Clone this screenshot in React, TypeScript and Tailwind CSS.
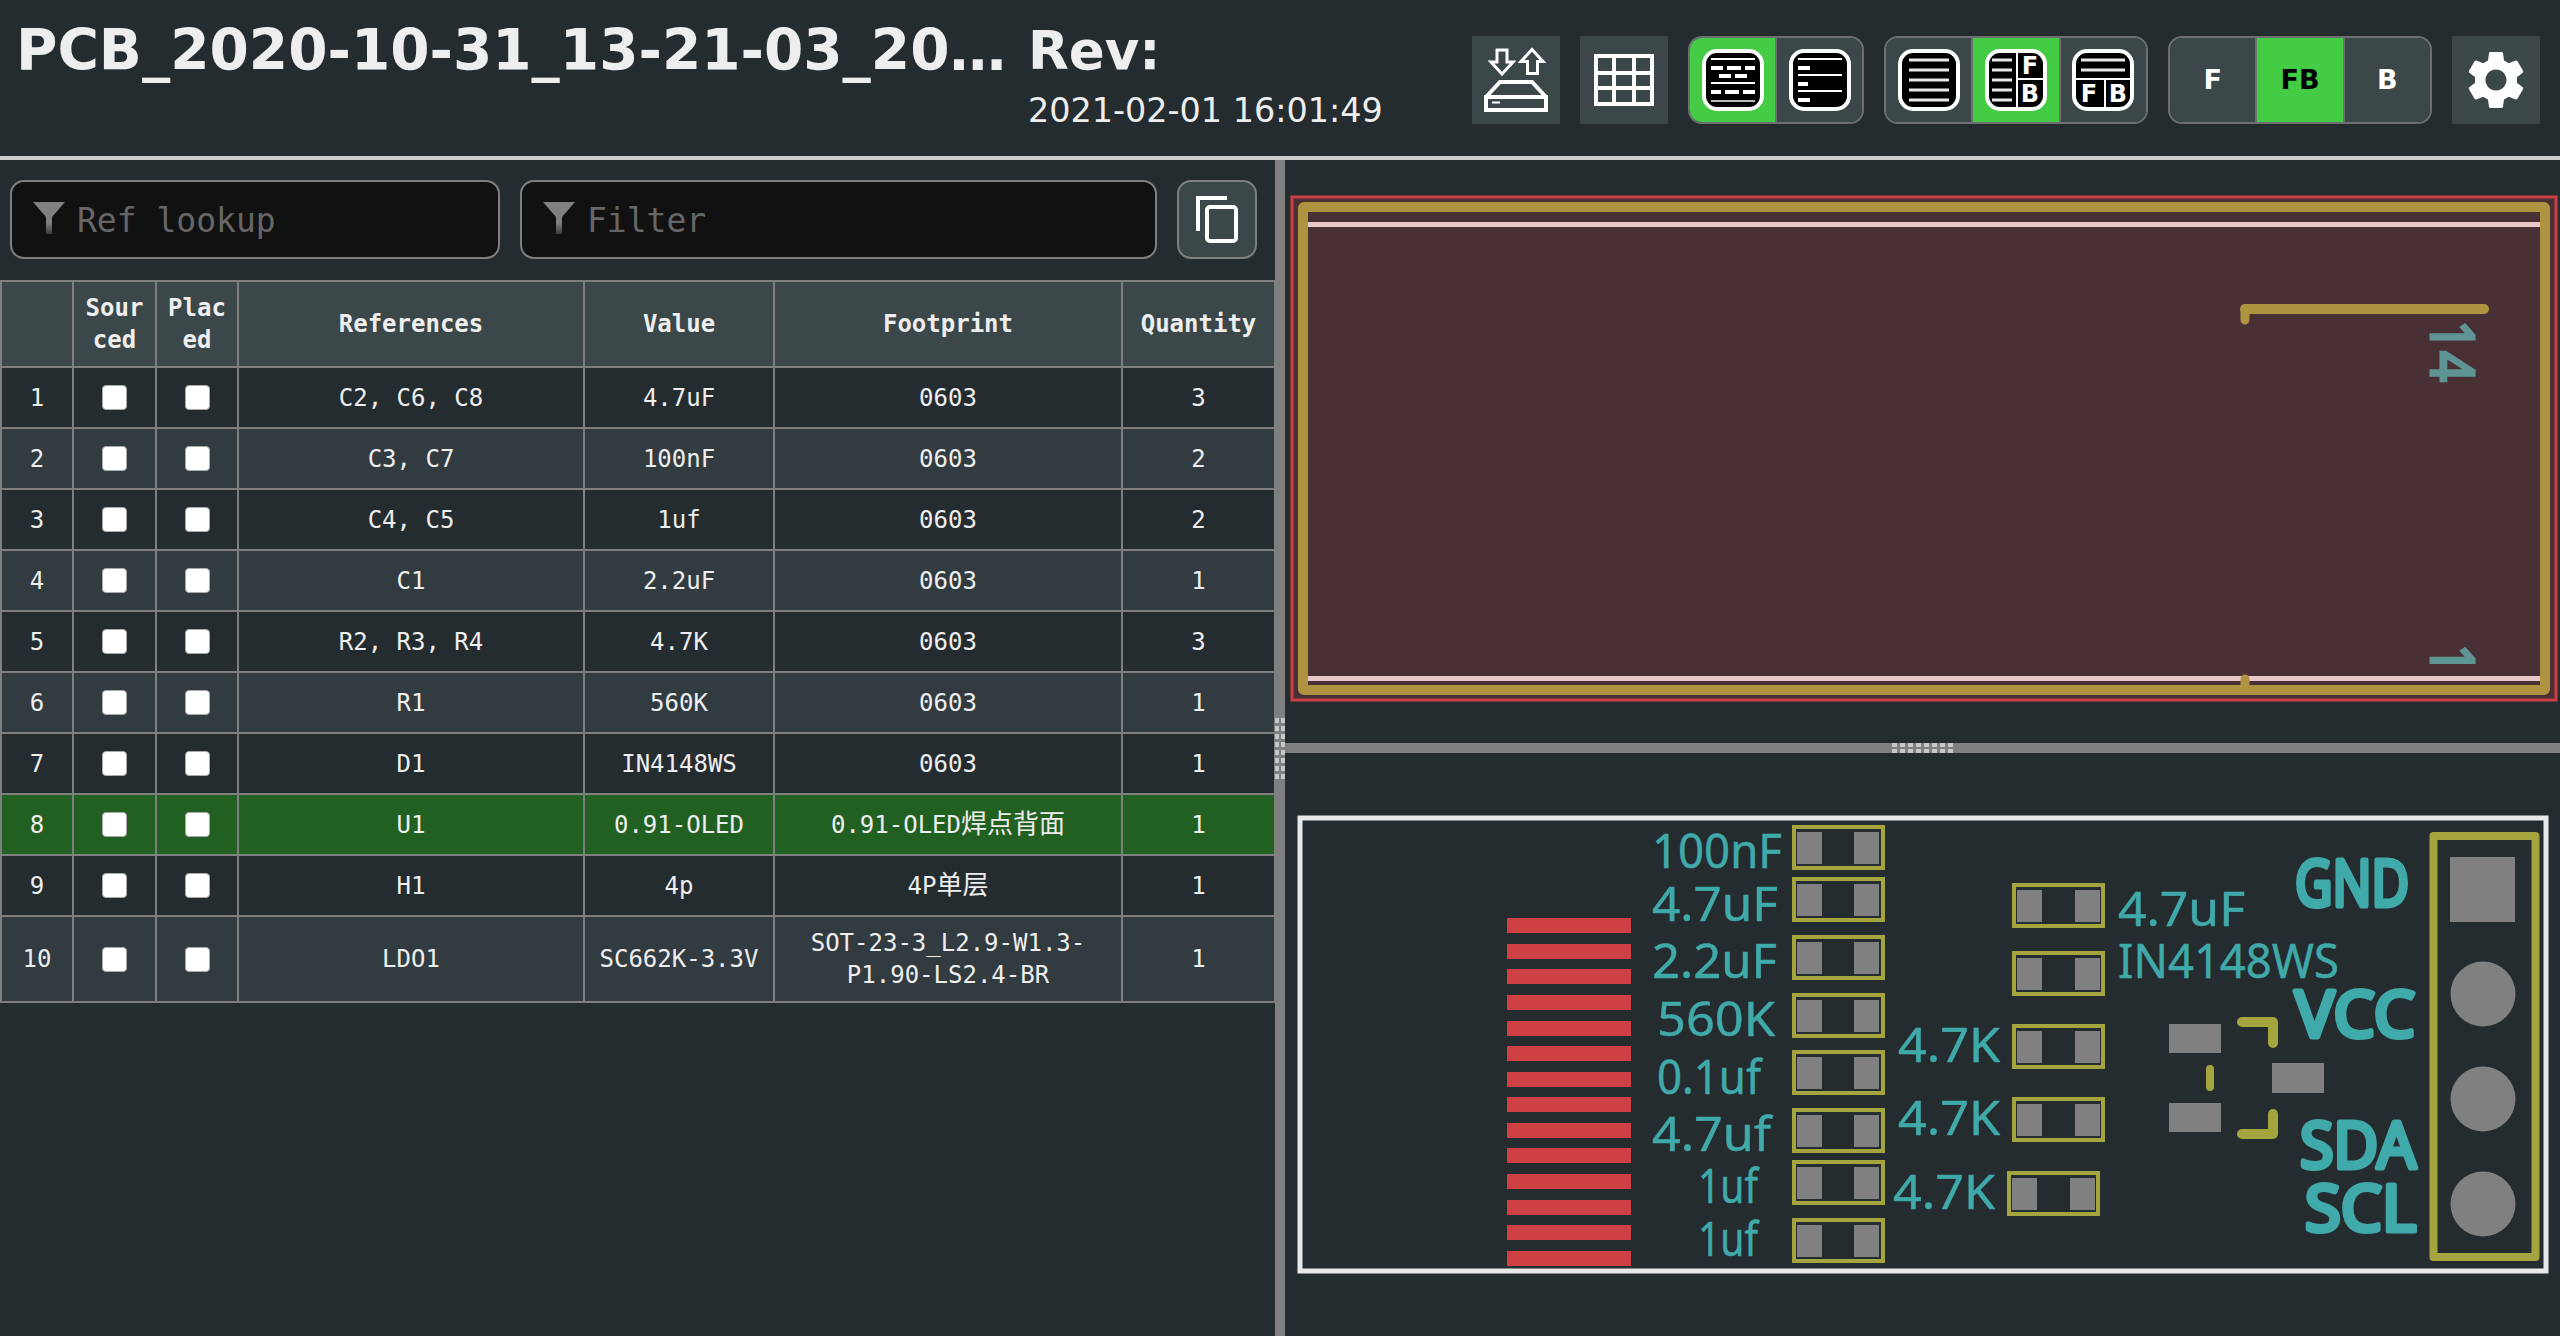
import React from 'react';

const Cjk = ({ children }: { children: React.ReactNode }) => <span className="text-[26px]">{children}</span>;

const rows: { n: number; refs: string; value: string; fp: React.ReactNode; qty: number }[] = [
  { n: 1, refs: 'C2, C6, C8', value: '4.7uF', fp: '0603', qty: 3 },
  { n: 2, refs: 'C3, C7', value: '100nF', fp: '0603', qty: 2 },
  { n: 3, refs: 'C4, C5', value: '1uf', fp: '0603', qty: 2 },
  { n: 4, refs: 'C1', value: '2.2uF', fp: '0603', qty: 1 },
  { n: 5, refs: 'R2, R3, R4', value: '4.7K', fp: '0603', qty: 3 },
  { n: 6, refs: 'R1', value: '560K', fp: '0603', qty: 1 },
  { n: 7, refs: 'D1', value: 'IN4148WS', fp: '0603', qty: 1 },
  { n: 8, refs: 'U1', value: '0.91-OLED', fp: <>0.91-OLED<Cjk>焊点背面</Cjk></>, qty: 1 },
  { n: 9, refs: 'H1', value: '4p', fp: <>4P<Cjk>单层</Cjk></>, qty: 1 },
  { n: 10, refs: 'LDO1', value: 'SC662K-3.3V', fp: 'SOT-23-3_L2.9-W1.3-P1.90-LS2.4-BR', qty: 1 },
];

// screen coordinates of the silkscreen labels: x, baseline, width, text
const thinLabels: [number, number, number, string][] = [
  [1652, 868, 130, '100nF'],
  [1652, 921, 126, '4.7uF'],
  [1652, 978, 125, '2.2uF'],
  [1657, 1036, 118, '560K'],
  [1657, 1094, 104, '0.1uf'],
  [1652, 1151, 119, '4.7uf'],
  [1698, 1203, 60, '1uf'],
  [1698, 1256, 60, '1uf'],
  [1898, 1062, 102, '4.7K'],
  [1898, 1135, 102, '4.7K'],
  [1893, 1209, 102, '4.7K'],
  [2118, 926, 127, '4.7uF'],
  [2118, 978, 221, 'IN4148WS'],
];

const boldLabels: [number, number, number, string][] = [
  [2295, 906, 114, 'GND'],
  [2295, 1037, 120, 'VCC'],
  [2300, 1168, 116, 'SDA'],
  [2305, 1231, 111, 'SCL'],
];

const redBars = [918, 944, 969, 995, 1021, 1046, 1072, 1097, 1123, 1148, 1174, 1200, 1225, 1251];

const leftParts = [825, 877, 935, 993, 1050, 1108, 1160, 1218];

const rightParts: [number, number][] = [
  [2012, 883],
  [2012, 951],
  [2012, 1024],
  [2012, 1097],
  [2007, 1171],
];

const IconFrame = ({ children }: { children: React.ReactNode }) => (
  <svg width="64" height="64" viewBox="-1 -1 64 64">
    <rect x="2" y="2" width="58" height="58" rx="13" fill="#000" stroke="#fff" strokeWidth="4" />
    {children}
  </svg>
);

const ToolButton = ({ children, active, divider }: { children: React.ReactNode; active?: boolean; divider?: boolean }) => (
  <div
    className={`flex-1 h-full flex items-center justify-center ${active ? 'bg-[#44cc44] text-black' : 'bg-[#3b4749] text-white'} ${divider ? 'border-l-2 border-[#6f6f6f]' : ''}`}
  >
    {children}
  </div>
);

const ToolGroup = ({ children, wide }: { children: React.ReactNode; wide?: boolean }) => (
  <div className={`${wide ? 'w-[264px]' : 'w-[176px]'} h-[88px] flex rounded-[14px] border-2 border-[#6f6f6f] overflow-hidden`}>{children}</div>
);

const FunnelIcon = () => (
  <svg width="32" height="32" viewBox="0 0 32 32" className="shrink-0 -translate-y-[2px]">
    <defs>
      <linearGradient id="funnelFade" x1="0" y1="0" x2="0" y2="1">
        <stop offset="0.65" stopColor="#808080" />
        <stop offset="1" stopColor="#3a3a3a" />
      </linearGradient>
    </defs>
    <path d="M0 0H32L19 15V32H13V15Z" fill="url(#funnelFade)" />
  </svg>
);

const Grip = ({ vertical }: { vertical?: boolean }) => (
  <svg width={vertical ? 10 : 61} height={vertical ? 61 : 10} viewBox={vertical ? '0 0 10 61' : '0 0 61 10'}>
    {[0, 8, 16, 24, 32, 40, 48, 56].map((p) =>
      vertical ? (
        <g key={p} fill="#c8c8c8">
          <rect x="0" y={p} width="4" height="5" />
          <rect x="6" y={p} width="4" height="5" />
        </g>
      ) : (
        <g key={p} fill="#c8c8c8">
          <rect x={p} y="0" width="5" height="4" />
          <rect x={p} y="6" width="5" height="4" />
        </g>
      ),
    )}
  </svg>
);

const Part = ({ x, y, w, gap }: { x: number; y: number; w: number; gap: number }) => (
  <g>
    <rect x={x + 2} y={y + 2} width={w - 4} height="41" fill="none" stroke="#a5a53f" strokeWidth="4" />
    <rect x={x + 5} y={y + 7} width="25" height="32" fill="#808080" />
    <rect x={x + gap} y={y + 7} width="25" height="32" fill="#808080" />
  </g>
);

const CheckCell = () => (
  <td className="border-2 border-[#7f7f7f]">
    <input type="checkbox" className="block mx-auto w-[25px] h-[25px] appearance-none bg-white rounded-[4px] border border-[#aaaaaa]" />
  </td>
);

export default function App() {
  return (
    <div className="h-screen flex flex-col bg-[#252c30] text-[#eeeeee] overflow-hidden font-['DejaVu_Sans_Mono','Noto_Sans_CJK_SC',monospace]">
      {/* Cabecera */}
      <div className="h-[160px] shrink-0 flex justify-between border-b-4 border-[#cccccc]">
        <div className="flex pl-4 pt-[19px] font-['DejaVu_Sans',sans-serif]">
          <div className="w-[1012px] text-[56.5px] leading-[64px] font-bold whitespace-nowrap">PCB_2020-10-31_13-21-03_20…</div>
          <div className="flex flex-col">
            <div className="text-[53px] leading-[64px] font-bold">Rev:</div>
            <div className="text-[33.4px] leading-[40px] mt-[8px] whitespace-nowrap">2021-02-01 16:01:49</div>
          </div>
        </div>

        <div className="flex gap-5 pt-9 pr-5">
          <div className="w-[88px] h-[88px] bg-[#3b4749]">
            <svg width="88" height="88" viewBox="0 0 88 88" fill="none" stroke="#fff" strokeWidth="3">
              <path d="M25 14H35V26H41L30 38L19 26H25Z" />
              <path d="M55.5 37.5H65.5V25.5H71L60 13.5L49 25.5H55.5Z" />
              <path d="M14 61L28 46H60L74 61" strokeWidth="4" />
              <rect x="14" y="61" width="60" height="13" strokeWidth="4" />
              <path d="M20 66.5H28" strokeWidth="2" />
            </svg>
          </div>
          <div className="w-[88px] h-[88px] bg-[#3b4749]">
            <svg width="88" height="88" viewBox="0 0 88 88" fill="none" stroke="#fff" strokeWidth="4">
              <rect x="16" y="20" width="56" height="48" />
              <path d="M34 20V68M54 20V68M16 37H72M16 52H72" />
            </svg>
          </div>

          <ToolGroup>
            <ToolButton active>
              <IconFrame>
                <g fill="#fff">
                  <rect x="9" y="9" width="44" height="2" />
                  <rect x="9" y="17" width="12" height="4" />
                  <rect x="25" y="17" width="14" height="4" />
                  <rect x="43" y="17" width="10" height="4" />
                  <rect x="17" y="25" width="12" height="4" />
                  <rect x="33" y="25" width="12" height="4" />
                  <rect x="9" y="33" width="44" height="2" />
                  <rect x="9" y="41" width="10" height="4" />
                  <rect x="23" y="41" width="14" height="4" />
                  <rect x="41" y="41" width="12" height="4" />
                  <rect x="9" y="51" width="44" height="2" fill="#bbb" />
                </g>
              </IconFrame>
            </ToolButton>
            <ToolButton divider>
              <IconFrame>
                <g fill="#fff">
                  <rect x="9" y="9" width="44" height="2" />
                  <rect x="9" y="17" width="12" height="4" />
                  <rect x="9" y="25" width="44" height="2" />
                  <rect x="9" y="33" width="10" height="4" />
                  <rect x="9" y="41" width="44" height="2" />
                  <rect x="9" y="49" width="12" height="4" />
                </g>
              </IconFrame>
            </ToolButton>
          </ToolGroup>

          <ToolGroup wide>
            <ToolButton>
              <IconFrame>
                <path d="M11 11H51M11 21H51M11 31H51M11 41H51M11 51H51" stroke="#e8e8e8" strokeWidth="3" />
              </IconFrame>
            </ToolButton>
            <ToolButton active divider>
              <IconFrame>
                <path d="M7 11H27M7 21H27M7 31H27M7 41H27M7 51H27" stroke="#e8e8e8" strokeWidth="3" />
                <path d="M32 3V59M32 30H59" stroke="#fff" strokeWidth="2" fill="none" />
                <text x="45" y="25" textAnchor="middle" fill="#fff" fontSize="24" fontWeight="700" className="font-['DejaVu_Sans',sans-serif]">F</text>
                <text x="45" y="53" textAnchor="middle" fill="#fff" fontSize="24" fontWeight="700" className="font-['DejaVu_Sans',sans-serif]">B</text>
              </IconFrame>
            </ToolButton>
            <ToolButton divider>
              <IconFrame>
                <path d="M9 11H53M9 21H53" stroke="#e8e8e8" strokeWidth="3" />
                <path d="M3 30H59M33 30V59" stroke="#fff" strokeWidth="2" fill="none" />
                <text x="17" y="53" textAnchor="middle" fill="#fff" fontSize="24" fontWeight="700" className="font-['DejaVu_Sans',sans-serif]">F</text>
                <text x="46" y="53" textAnchor="middle" fill="#fff" fontSize="24" fontWeight="700" className="font-['DejaVu_Sans',sans-serif]">B</text>
              </IconFrame>
            </ToolButton>
          </ToolGroup>

          <ToolGroup wide>
            <ToolButton><span className="text-[27px] font-bold font-['DejaVu_Sans',sans-serif]">F</span></ToolButton>
            <ToolButton active divider><span className="text-[27px] font-bold font-['DejaVu_Sans',sans-serif]">FB</span></ToolButton>
            <ToolButton divider><span className="text-[27px] font-bold font-['DejaVu_Sans',sans-serif]">B</span></ToolButton>
          </ToolGroup>

          <div className="w-[88px] h-[88px] bg-[#3b4749] flex items-center justify-center">
            <svg width="70" height="70" viewBox="0 0 24 24" fill="#fff">
              <path d="M19.14 12.94c.04-.3.06-.61.06-.94 0-.32-.02-.64-.07-.94l2.03-1.58c.18-.14.23-.41.12-.61l-1.92-3.32c-.12-.22-.37-.29-.59-.22l-2.39.96c-.5-.38-1.03-.7-1.62-.94l-.36-2.54c-.04-.24-.24-.41-.48-.41h-3.84c-.24 0-.43.17-.47.41l-.36 2.54c-.59.24-1.13.57-1.62.94l-2.39-.96c-.22-.08-.47 0-.59.22L2.74 8.87c-.12.21-.08.47.12.61l2.03 1.58c-.05.3-.09.63-.09.94s.02.64.07.94l-2.03 1.58c-.18.14-.23.41-.12.61l1.92 3.32c.12.22.37.29.59.22l2.39-.96c.5.38 1.03.7 1.62.94l.36 2.54c.05.24.24.41.48.41h3.84c.24 0 .44-.17.47-.41l.36-2.54c.59-.24 1.13-.56 1.62-.94l2.39.96c.22.08.47 0 .59-.22l1.92-3.32c.12-.22.07-.47-.12-.61l-2.01-1.58zM12 15.6c-1.98 0-3.6-1.62-3.6-3.6s1.62-3.6 3.6-3.6 3.6 1.62 3.6 3.6-1.62 3.6-3.6 3.6z" />
            </svg>
          </div>
        </div>
      </div>

      <div className="flex-1 flex min-h-0">
        {/* Panel BOM */}
        <div className="w-[1275px] shrink-0 flex flex-col">
          <div className="h-[79px] mt-5 flex gap-5 pl-[10px] pr-[18px]">
            <div className="w-[490px] flex items-center gap-[12px] pl-[21px] rounded-[14px] border-2 border-[#7f7f7f] bg-[#111111]">
              <FunnelIcon />
              <input placeholder="Ref lookup" className="flex-1 min-w-0 pt-[2px] bg-transparent outline-none text-[33px] placeholder:text-[#666666]" />
            </div>
            <div className="flex-1 flex items-center gap-[12px] pl-[21px] rounded-[14px] border-2 border-[#7f7f7f] bg-[#111111]">
              <FunnelIcon />
              <input placeholder="Filter" className="flex-1 min-w-0 pt-[2px] bg-transparent outline-none text-[33px] placeholder:text-[#666666]" />
            </div>
            <div className="w-[80px] flex items-center justify-center rounded-[14px] border-2 border-[#7f7f7f] bg-[#3b4749]">
              <svg width="42" height="47" viewBox="0 0 42 47" fill="none" stroke="#fff" strokeWidth="4">
                <path d="M31 2H2V35" />
                <rect x="11" y="11" width="29" height="34" rx="3" />
              </svg>
            </div>
          </div>

          <table className="mt-[21px] w-[1274px] table-fixed border-collapse text-[24px] leading-[32px] text-center">
            <colgroup>
              <col className="w-[72px]" />
              <col className="w-[83px]" />
              <col className="w-[82px]" />
              <col className="w-[346px]" />
              <col className="w-[190px]" />
              <col className="w-[348px]" />
              <col className="w-[153px]" />
            </colgroup>
            <thead>
              <tr className="h-[86px] bg-[#3b4749]">
                <th className="border-2 border-[#7f7f7f]"></th>
                <th className="border-2 border-[#7f7f7f] px-[8px] break-all font-bold">Sourced</th>
                <th className="border-2 border-[#7f7f7f] px-[8px] break-all font-bold">Placed</th>
                <th className="border-2 border-[#7f7f7f] font-bold">References</th>
                <th className="border-2 border-[#7f7f7f] font-bold">Value</th>
                <th className="border-2 border-[#7f7f7f] font-bold">Footprint</th>
                <th className="border-2 border-[#7f7f7f] font-bold">Quantity</th>
              </tr>
            </thead>
            <tbody>
              {rows.map((r) => (
                <tr
                  key={r.n}
                  className={`${r.n === 10 ? 'h-[86px]' : 'h-[61px]'} ${r.n === 8 ? 'bg-[#226022]' : r.n % 2 === 0 ? 'bg-[#313b40]' : 'bg-[#252c30]'}`}
                >
                  <td className="border-2 border-[#7f7f7f]">{r.n}</td>
                  <CheckCell />
                  <CheckCell />
                  <td className="border-2 border-[#7f7f7f]">{r.refs}</td>
                  <td className="border-2 border-[#7f7f7f] px-[8px]">{r.value}</td>
                  <td className="border-2 border-[#7f7f7f] px-[8px]">{r.fp}</td>
                  <td className="border-2 border-[#7f7f7f]">{r.qty}</td>
                </tr>
              ))}
            </tbody>
          </table>
        </div>

        {/* Separador vertical */}
        <div className="w-[10px] shrink-0 bg-[#7f7f7f] flex items-center justify-center">
          <Grip vertical />
        </div>

        {/* Vistas de la placa */}
        <div className="flex-1 flex flex-col min-w-0">
          <div className="flex-1 min-h-0">
            <svg width="1275" height="583" viewBox="1285 160 1275 583" className="block">
              <rect x="1292" y="197" width="1264" height="503" fill="#493035" stroke="#cc3f44" strokeWidth="3" />
              <g fill="#e8c8c8">
                <rect x="1308" y="222" width="1232" height="5" />
                <rect x="1308" y="676" width="1232" height="5" />
              </g>
              <rect x="1303" y="207" width="1242" height="483" rx="1" fill="none" stroke="#b09340" strokeWidth="10" />
              <path d="M2245 309H2484" stroke="#b09340" strokeWidth="10" strokeLinecap="round" />
              <path d="M2245 309V320M2245 679V686" stroke="#b09340" strokeWidth="9" strokeLinecap="round" />
              <g fill="#5f9494" stroke="#5f9494" strokeWidth="3" fontSize="60" className="font-['Noto_Sans',sans-serif]">
                <text transform="translate(2431 320) rotate(90)" textLength="62" lengthAdjust="spacingAndGlyphs">14</text>
                <text transform="translate(2431 644) rotate(90)" textLength="30" lengthAdjust="spacingAndGlyphs">1</text>
              </g>
            </svg>
          </div>

          <div className="h-[10px] shrink-0 bg-[#7f7f7f] flex items-center justify-center">
            <Grip />
          </div>

          <div className="h-[583px] shrink-0">
            <svg width="1275" height="583" viewBox="1285 753 1275 583" className="block">
              <rect x="1300" y="818" width="1246" height="453" fill="none" stroke="#e8e8e8" strokeWidth="5" />

              {redBars.map((y) => (
                <rect key={y} x="1507" y={y} width="124" height="15" fill="#cf4044" />
              ))}

              {leftParts.map((y) => (
                <Part key={y} x={1792} y={y} w={93} gap={62} />
              ))}
              {rightParts.map(([x, y]) => (
                <Part key={y} x={x} y={y} w={93} gap={63} />
              ))}

              <g fill="#808080">
                <rect x="2169" y="1024" width="52" height="29" />
                <rect x="2169" y="1103" width="52" height="29" />
                <rect x="2272" y="1063" width="52" height="30" />
                <rect x="2450" y="857" width="65" height="65" />
                <circle cx="2483" cy="994" r="32.5" />
                <circle cx="2483" cy="1099" r="32.5" />
                <circle cx="2483" cy="1204" r="32.5" />
              </g>

              <g fill="none" stroke="#a5a53f" strokeLinecap="round" strokeLinejoin="round">
                <path d="M2242 1022H2273V1043M2273 1114V1134H2242" strokeWidth="10" />
                <path d="M2210 1069V1087" strokeWidth="8" />
                <rect x="2433.5" y="836" width="102" height="421" strokeWidth="8" />
              </g>

              <g fill="#40aaaa" stroke="#40aaaa" strokeWidth="0.5" strokeLinejoin="round" fontSize="48" className="font-['Noto_Sans',sans-serif]">
                {thinLabels.map(([x, y, w, t]) => (
                  <text key={`${x}-${y}`} x={x} y={y} textLength={w} lengthAdjust="spacingAndGlyphs">{t}</text>
                ))}
              </g>
              <g fill="#40aaaa" stroke="#40aaaa" strokeWidth="5" strokeLinejoin="round" fontSize="63" className="font-['Noto_Sans',sans-serif]">
                {boldLabels.map(([x, y, w, t]) => (
                  <text key={t} x={x} y={y} textLength={w} lengthAdjust="spacingAndGlyphs">{t}</text>
                ))}
              </g>
            </svg>
          </div>
        </div>
      </div>
    </div>
  );
}
